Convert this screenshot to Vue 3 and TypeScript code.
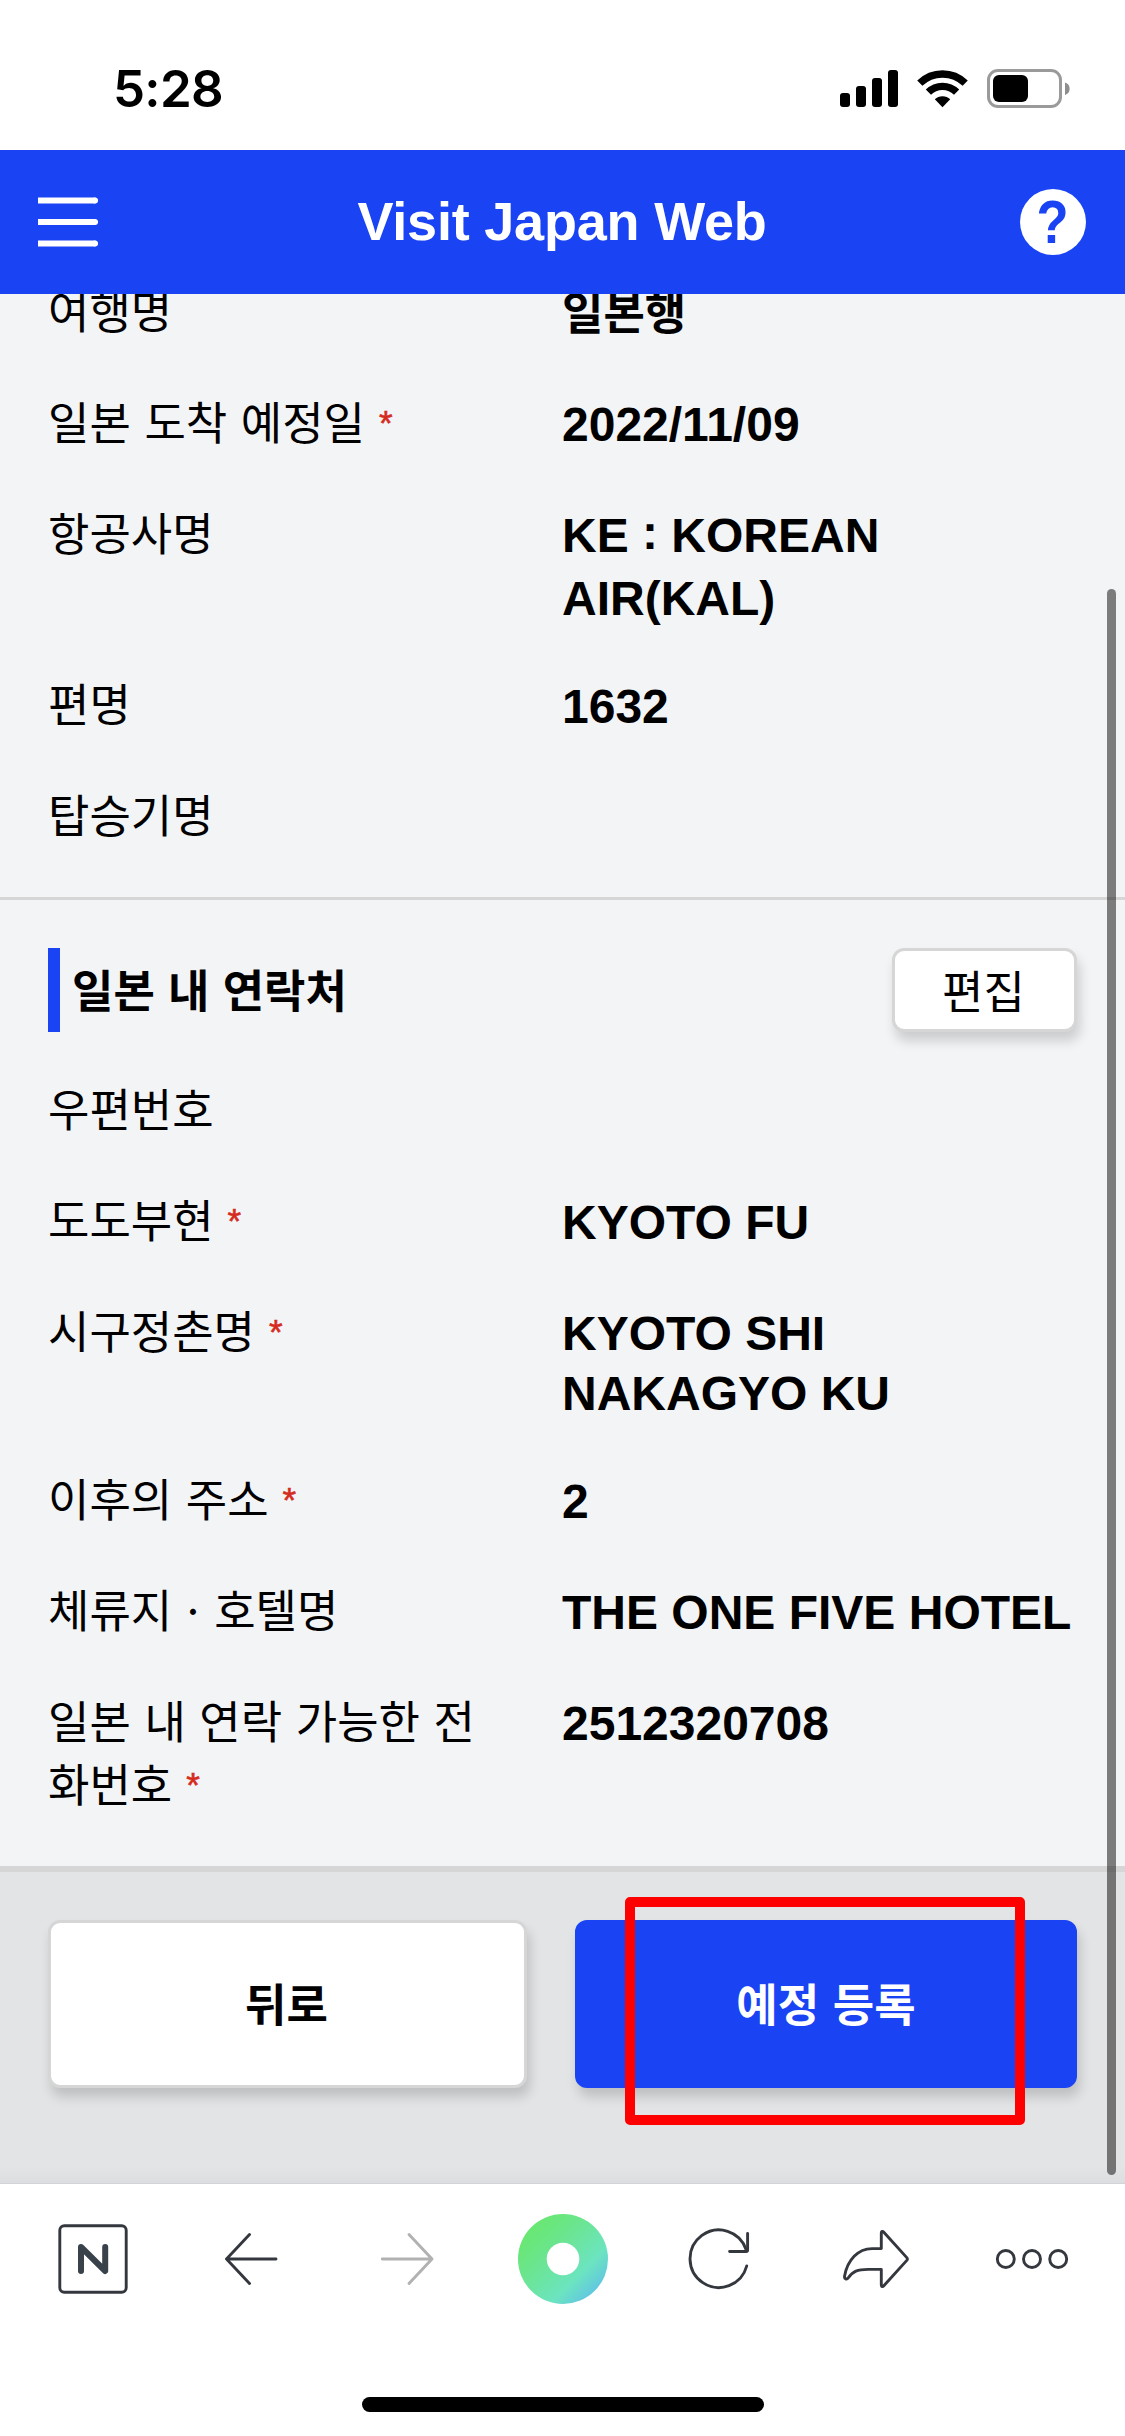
<script setup lang="ts">
interface Field {
  label: string
  value?: string[]
  required?: boolean
  korean?: boolean
  kind?: 'colon' | 'double' | 'phone' | 'dotted'
}

const flight: Field[] = [
  { label: '여행명', value: ['일본행'], korean: true },
  { label: '일본 도착 예정일', value: ['2022/11/09'], required: true },
  { label: '항공사명', value: ['KE', 'KOREAN AIR(KAL)'], kind: 'colon' },
  { label: '편명', value: ['1632'] },
  { label: '탑승기명' },
]

const contact: Field[] = [
  { label: '우편번호' },
  { label: '도도부현', value: ['KYOTO FU'], required: true },
  { label: '시구정촌명', value: ['KYOTO SHI NAKAGYO KU'], required: true, kind: 'double' },
  { label: '이후의 주소', value: ['2'], required: true },
  { label: '체류지 · 호텔명', value: ['THE ONE FIVE HOTEL'], kind: 'dotted' },
  { label: '일본 내 연락 가능한 전화번호', value: ['2512320708'], required: true, kind: 'phone' },
]
</script>

<template>
  <div class="screen">
    <div class="status">
      <span class="time">5:28</span>
      <svg class="indicators" width="232" height="42" viewBox="839 67 232 42">
        <rect x="840" y="93" width="10" height="14" rx="3" />
        <rect x="856" y="86" width="10" height="21" rx="3" />
        <rect x="872" y="78" width="10" height="29" rx="3" />
        <rect x="888" y="70" width="10" height="37" rx="3" />
        <g fill="none" stroke="#000">
          <path d="M919.8 83.200a32.500 32.500 0 0 1 45.400 0" stroke-width="7.400" />
          <path d="M928.400 92.200a20 20 0 0 1 28.200 0" stroke-width="7.400" />
        </g>
        <path d="M942.500 107.200L934.800 99.300a11 11 0 0 1 15.400 0z" />
        <rect x="988.500" y="70.500" width="72" height="36" rx="9.500" fill="none" stroke="#9a9a9a" stroke-width="3" />
        <rect x="993" y="75" width="35" height="27" rx="6" />
        <path d="M1065 82.500a6.600 6.600 0 0 1 0 12.600z" fill="#8e8e8e" />
      </svg>
    </div>

    <header class="header">
      <svg class="menu" width="60" height="52" viewBox="0 0 60 52">
        <path d="M0 4.500h57.500M0 26h57.500M0 47.500h57.500" stroke="#fff" stroke-width="6.200" />
        <path d="M57 4.500h.1M57 26h.1M57 47.500h.1" stroke="#fff" stroke-width="6" stroke-linecap="round" />
      </svg>
      <h1>Visit Japan Web</h1>
      <span class="help"><span class="mark">?</span></span>
    </header>

    <main class="content">
      <section class="flight">
        <div v-for="f in flight" :key="f.label" class="row" :class="f.kind">
          <div class="label">{{ f.label }}<span v-if="f.required" class="star">*</span></div>
          <div v-if="f.kind === 'colon' && f.value" class="value">
            {{ f.value[0] }} <span class="sign">:</span> {{ f.value[1] }}
          </div>
          <div v-else-if="f.value" class="value" :class="{ korean: f.korean }">{{ f.value[0] }}</div>
        </div>
      </section>

      <section class="contact">
        <div class="heading">
          <h2>일본 내 연락처</h2>
          <button class="edit">편집</button>
        </div>
        <div v-for="f in contact" :key="f.label" class="row" :class="f.kind">
          <div class="label">{{ f.label }}<span v-if="f.required" class="star">*</span></div>
          <div v-if="f.value" class="value">{{ f.value[0] }}</div>
        </div>
      </section>
    </main>

    <div class="actions">
      <button class="back">뒤로</button>
      <button class="submit">예정 등록</button>
      <span class="highlight"></span>
    </div>
    <span class="scrollbar"></span>

    <nav class="toolbar">
      <svg width="1125" height="120" viewBox="0 2199 1125 120" fill="none" stroke="#34383e" stroke-width="2.900" stroke-linecap="round" stroke-linejoin="round">
        <defs>
          <linearGradient id="ring" x1="0" y1="0" x2="1" y2="1">
            <stop offset="0.15" stop-color="#69e772" />
            <stop offset="0.35" stop-color="#6be58a" />
            <stop offset="0.68" stop-color="#6ce4c0" />
            <stop offset="0.9" stop-color="#5fc0e8" />
          </linearGradient>
        </defs>
        <rect x="59.800" y="2225.800" width="66.400" height="66.400" rx="4.500" />
        <path d="M81 2271v-24l24.200 24v-24" stroke="#39424a" stroke-width="6" />
        <path d="M249.500 2234.500L226.500 2259l23 24.500M226.500 2259h49.500" />
        <path d="M409 2234.500l23 24.500-23 24.500M432 2259h-49.700" stroke="#b1b1b1" />
        <circle cx="563" cy="2259" r="45" fill="url(#ring)" stroke="none" />
        <circle cx="563" cy="2259" r="16.300" fill="#fff" stroke="none" />
        <path d="M746.700 2266a28.800 28.800 0 1 1-.4-16" />
        <path d="M747.600 2233.500v16.500q0 1.500-1.500 1.500h-16.500" />
        <path d="M881.300 2248.600h-9.300c-14 0-24.500 11.500-27.400 27.400c-.6 3 2 4 3.800 1.700c4.500-6.500 9-8.300 19.600-8.300h13.300v15.600c0 1.700 1.400 2 2.300 1l23.200-25.600q1.200-1.400 0-2.800l-23.200-25.600c-.9-1-2.300-.7-2.300 1z" />
        <circle cx="1005.800" cy="2259" r="8.500" />
        <circle cx="1032" cy="2259" r="8.500" />
        <circle cx="1058.200" cy="2259" r="8.500" />
      </svg>
      <span class="home"></span>
    </nav>
  </div>
</template>

<style>
body {
  background: #fff;
}
</style>

<style scoped>
.screen {
  position: relative;
  display: flex;
  flex-direction: column;
  width: 1125px;
  height: 2436px;
  overflow: hidden;
  background: #fff;
  color: #000;
  font-family: 'Noto Sans CJK KR', sans-serif;
  font-size: 45px;
}
.screen * {
  box-sizing: border-box;
}
.status {
  display: flex;
  justify-content: space-between;
  align-items: flex-start;
  height: 150px;
  padding: 67px 54px 0 113px;
}
.time {
  font: 600 51px/44px Inter, sans-serif;
  letter-spacing: -0.7px;
}
.header {
  display: flex;
  justify-content: space-between;
  align-items: center;
  height: 144px;
  padding: 0 39px 0 38px;
  background: #1a43f4;
  color: #fff;
}
.menu {
  margin-right: 6px;
}
h1 {
  margin: 0;
  padding-bottom: 3px;
  font: bold 54px/60px 'Liberation Sans', sans-serif;
  letter-spacing: -0.2px;
}
.help {
  display: flex;
  justify-content: center;
  width: 66px;
  height: 66px;
  border-radius: 50%;
  background: #fff;
  color: #1a43f4;
}
.mark {
  font: bold 61px/66px 'Liberation Sans', sans-serif;
  transform: scaleX(0.86);
}
.content {
  height: 1572px;
  overflow: hidden;
  background: #f3f4f6;
}
.flight {
  display: flow-root;
  height: 606px;
  border-bottom: 3px solid #d6d6d6;
}
.flight .row:first-child {
  margin-top: -15px;
}
.row {
  display: flex;
  height: 111px;
  padding-left: 48px;
  line-height: 63px;
}
.row.colon {
  height: 171px;
}
.row.double {
  height: 168px;
}
.row.phone {
  height: 174px;
}
.label {
  flex: none;
  width: 514px;
  margin-top: -1px;
  padding-right: 60px;
  word-spacing: 3.5px;
  word-break: break-all;
}
.row.dotted .label {
  word-spacing: -1.7px;
}
.star {
  margin-left: 14px;
  position: relative;
  top: -5px;
  color: #d52b1e;
  font: 35px/0 'Liberation Sans', sans-serif;
  -webkit-text-stroke: 0.6px #d52b1e;
}
.value {
  width: 530px;
  padding-top: 5px;
  font: bold 48px/60px 'Liberation Sans', sans-serif;
}
.row.colon .value {
  width: 400px;
  padding-top: 3px;
  line-height: 63px;
}
.row.double .value {
  width: 400px;
}
.sign {
  position: relative;
  top: -3px;
}
.value.korean {
  padding-top: 0;
  font: bold 45px/63px 'Noto Sans CJK KR', sans-serif;
}
.heading {
  display: flex;
  justify-content: space-between;
  align-items: center;
  margin: 48px 48px 45px;
  height: 84px;
}
h2 {
  margin: 0;
  height: 84px;
  padding-left: 12px;
  border-left: 12px solid #1a43f4;
  font-size: 45px;
  line-height: 82px;
  font-weight: bold;
  word-spacing: 3px;
}
button {
  margin: 0;
  padding: 0;
  border: 3px solid #d6d6d6;
  border-radius: 12px;
  background: #fff;
  color: #000;
  font: bold 45px 'Noto Sans CJK KR', sans-serif;
  box-shadow: 3px 9px 12px rgba(0, 0, 0, 0.16);
}
.edit {
  width: 185px;
  height: 84px;
  padding-right: 2px;
  font-weight: normal;
  line-height: 76px;
}
.actions {
  position: relative;
  display: flex;
  justify-content: space-between;
  height: 318px;
  padding: 48px 48px 0;
  border-top: 6px solid #d6d6d6;
  background: linear-gradient(#e3e4e5 0 296px, #dcdde0 311px, #c9cacd 312px);
}
.actions button {
  height: 168px;
  padding-bottom: 3px;
  line-height: 156px;
  word-spacing: 3.5px;
}
.actions .back {
  width: 479px;
  padding-right: 2px;
}
.actions .submit {
  width: 502px;
  border-color: #1a43f4;
  background: #1a43f4;
  color: #fff;
}
.highlight {
  position: absolute;
  left: 625px;
  top: 25px;
  width: 400px;
  height: 228px;
  border: 10px solid #f00;
  border-radius: 5px;
}
.scrollbar {
  position: absolute;
  left: 1107px;
  top: 589px;
  width: 9px;
  height: 1586px;
  border-radius: 5px;
  background: rgba(0, 0, 0, 0.49);
}
.toolbar {
  display: flex;
  flex-direction: column;
  align-items: center;
  padding-top: 15px;
  height: 252px;
}
.home {
  width: 402px;
  height: 15px;
  margin-top: 78px;
  border-radius: 8px;
  background: #000;
}
</style>
